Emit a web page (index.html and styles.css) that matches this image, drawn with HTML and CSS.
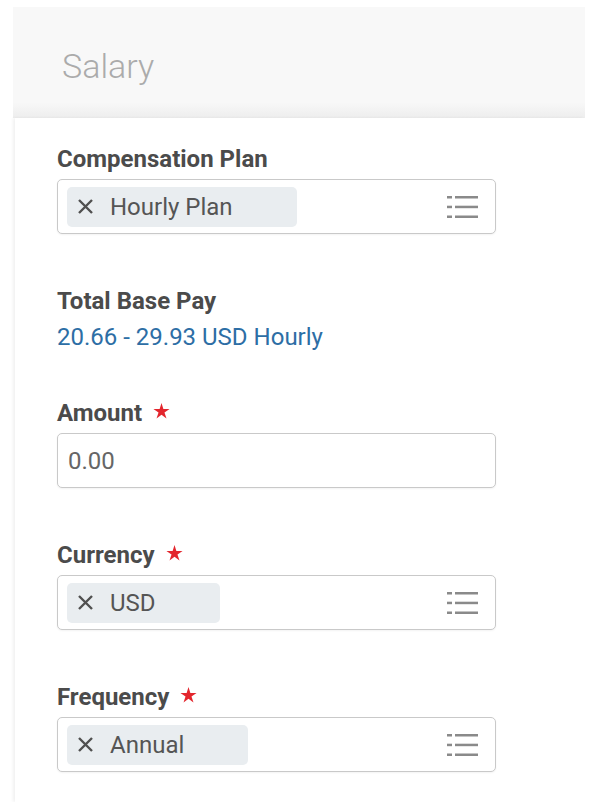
FILE: index.html
```html
<!DOCTYPE html>
<html lang="en">
<head>
<meta charset="utf-8">
<title>Salary</title>
<link rel="stylesheet" href="styles.css">
</head>
<body>
  <header class="section-head">
    <h2 class="section-title">Salary</h2>
  </header>

  <main class="section-body">
    <div class="field">
      <div class="field-label">Compensation Plan</div>
      <div class="input prompt">
        <span class="pill">
          <svg class="pill-x" width="17" height="17" viewBox="0 0 17 17"><path d="M2 2 L15 15 M15 2 L2 15"/></svg>
          <span class="pill-text">Hourly Plan</span>
        </span>
        <svg class="prompt-icon" width="31" height="24" viewBox="0 0 31 24">
          <rect x="0" y="1" width="5" height="2.5"/><rect x="8" y="1" width="23" height="2.5"/>
          <rect x="0" y="10.7" width="5" height="2.5"/><rect x="8" y="10.7" width="23" height="2.5"/>
          <rect x="0" y="20.5" width="5" height="2.5"/><rect x="8" y="20.5" width="23" height="2.5"/>
        </svg>
      </div>
    </div>

    <div class="field readonly">
      <div class="field-label">Total Base Pay</div>
      <div class="field-value">20.66 - 29.93 USD Hourly</div>
    </div>

    <div class="field">
      <div class="field-label">Amount <svg class="req" width="17" height="16" viewBox="0 0 16 15"><polygon points="8,0 9.75,5.6 15.61,5.53 10.8,8.95 12.7,14.47 8,11 3.3,14.47 5.2,8.95 0.39,5.53 6.25,5.6"/></svg></div>
      <div class="input text">0.00</div>
    </div>

    <div class="field">
      <div class="field-label">Currency <svg class="req" width="17" height="16" viewBox="0 0 16 15"><polygon points="8,0 9.75,5.6 15.61,5.53 10.8,8.95 12.7,14.47 8,11 3.3,14.47 5.2,8.95 0.39,5.53 6.25,5.6"/></svg></div>
      <div class="input prompt">
        <span class="pill">
          <svg class="pill-x" width="17" height="17" viewBox="0 0 17 17"><path d="M2 2 L15 15 M15 2 L2 15"/></svg>
          <span class="pill-text">USD</span>
        </span>
        <svg class="prompt-icon" width="31" height="24" viewBox="0 0 31 24">
          <rect x="0" y="1" width="5" height="2.5"/><rect x="8" y="1" width="23" height="2.5"/>
          <rect x="0" y="10.7" width="5" height="2.5"/><rect x="8" y="10.7" width="23" height="2.5"/>
          <rect x="0" y="20.5" width="5" height="2.5"/><rect x="8" y="20.5" width="23" height="2.5"/>
        </svg>
      </div>
    </div>

    <div class="field">
      <div class="field-label">Frequency <svg class="req" width="17" height="16" viewBox="0 0 16 15"><polygon points="8,0 9.75,5.6 15.61,5.53 10.8,8.95 12.7,14.47 8,11 3.3,14.47 5.2,8.95 0.39,5.53 6.25,5.6"/></svg></div>
      <div class="input prompt">
        <span class="pill">
          <svg class="pill-x" width="17" height="17" viewBox="0 0 17 17"><path d="M2 2 L15 15 M15 2 L2 15"/></svg>
          <span class="pill-text">Annual</span>
        </span>
        <svg class="prompt-icon" width="31" height="24" viewBox="0 0 31 24">
          <rect x="0" y="1" width="5" height="2.5"/><rect x="8" y="1" width="23" height="2.5"/>
          <rect x="0" y="10.7" width="5" height="2.5"/><rect x="8" y="10.7" width="23" height="2.5"/>
          <rect x="0" y="20.5" width="5" height="2.5"/><rect x="8" y="20.5" width="23" height="2.5"/>
        </svg>
      </div>
    </div>
  </main>
</body>
</html>
```

FILE: styles.css
```css
* {
  box-sizing: border-box;
}

html, body {
  margin: 0;
  background: #ffffff;
}

body {
  font-family: Roboto, "Noto Sans", Arial, sans-serif;
  color: #4a4a4a;
}

/* Grey section header band */
.section-head {
  margin: 7px 7px 0 13px;
  height: 111px;
  display: flex;
  align-items: center;
  padding: 6px 0 0 49px;
  background: linear-gradient(to bottom, #f8f8f8 0, #f8f8f8 86%, #ededed 100%);
}

.section-title {
  margin: 0;
  font-size: 34px;
  font-weight: 300;
  color: #ababab;
  line-height: 40px;
}

/* White form panel */
.section-body {
  margin: 0 7px 0 15px;
  padding: 27px 0 30px 42px;
  background: #ffffff;
  box-shadow: -2px 0 3px rgba(0, 0, 0, 0.06);
}

.field {
  width: 439px;
  margin-bottom: 53px;
}

.field:last-child {
  margin-bottom: 0;
}

.field.readonly {
  margin-bottom: 48px;
}

.field-label {
  display: flex;
  align-items: center;
  font-size: 24px;
  font-weight: 700;
  line-height: 28px;
  color: #4b4b4b;
  height: 28px;
}

.req {
  margin-left: 11px;
  margin-top: -5px;
  fill: #e3262d;
}

.field-value {
  margin-top: 8px;
  font-size: 24px;
  line-height: 28px;
  color: #2d6ea5;
}

.input {
  margin-top: 6px;
  height: 55px;
  border: 1px solid #c9c9c9;
  border-radius: 5px;
  background: #ffffff;
  box-shadow: 0 1px 2px rgba(0, 0, 0, 0.05);
  display: flex;
  align-items: center;
}

.input.text {
  padding-left: 10px;
  font-size: 24px;
  color: #666666;
}

.input.prompt {
  padding: 0 17px 0 9px;
  justify-content: space-between;
}

.pill {
  display: flex;
  align-items: center;
  height: 40px;
  padding: 0 64px 0 10px;
  border-radius: 5px;
  background: #e9edf0;
}

.pill-x {
  stroke: #505050;
  stroke-width: 2.4;
  fill: none;
  margin-right: 16px;
}

.pill-text {
  font-size: 24px;
  color: #555555;
  line-height: 28px;
}

.prompt-icon {
  fill: #8a8a8a;
}
```
